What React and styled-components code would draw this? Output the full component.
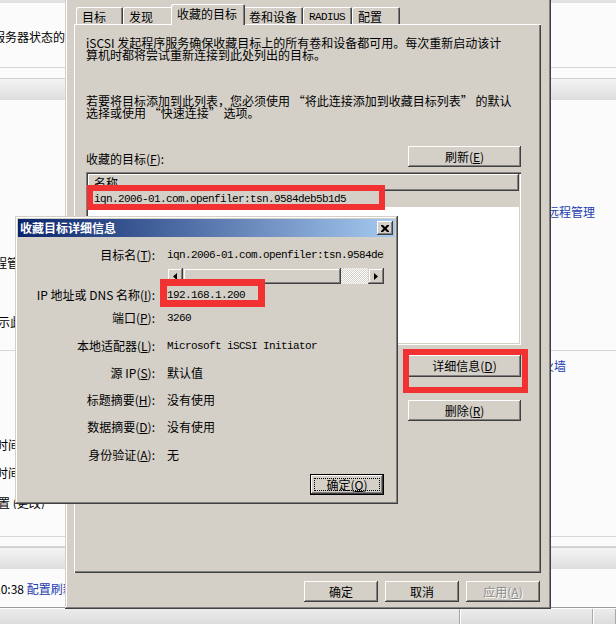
import React from "react";
import styled, { createGlobalStyle, css } from "styled-components";

const FACE = "#d4d0c8";
const CJK = `"Noto Sans CJK SC", "Liberation Sans", sans-serif`;
const MONO = `"Liberation Mono", "DejaVu Sans Mono", monospace`;
const RED = "#f23232";
const LINK = "#1c3cb0";

const GlobalStyle = createGlobalStyle`
  html, body { margin: 0; padding: 0; background: #fff; }
  body { font-family: ${CJK}; font-size: 12px; }
  *, *::before, *::after { box-sizing: border-box; }
`;

const Screen = styled.div`
  position: relative;
  width: 616px;
  height: 624px;
  overflow: hidden;
  font-family: ${CJK};
  font-size: 12px;
  line-height: 12px;
  color: #000;
`;

/* ---------- background page (server manager) ---------- */
const Page = styled.div`
  display: grid;
  grid-template-rows: 608px 16px;
  height: 100%;
`;

const Content = styled.div`
  display: flex;
  flex-direction: column;
  background: #fbfbfb;
  overflow: hidden;
  border-bottom: 1px solid #9a9a9a;
`;

const PageRow = styled.div`
  flex: none;
  display: grid;
  grid-template-columns: 65px 482px 1fr;
  align-items: center;
  height: ${(p) => p.$h}px;
  ${(p) => p.$rule && css`border-bottom: 1px solid #d6d6d6;`}
  ${(p) => p.$tone && css`background: ${p.$tone};`}
`;

const Band = styled.div`
  flex: none;
  height: 22px;
  border-top: 1px solid #d0d0d0;
  background: linear-gradient(#f4f4f4, #dedede);
`;

const Clip = styled.div`
  overflow: hidden;
  white-space: nowrap;
  display: flex;
  justify-content: ${(p) => (p.$end ? "flex-end" : "flex-start")};
`;

const PageText = styled.span`
  flex: none;
  margin-left: ${(p) => p.$shift || 0}px;
  color: ${(p) => (p.$link ? LINK : "#000")};
`;

const StatusBar = styled.div`
  display: flex;
  background: linear-gradient(#ececec, #dcdcdc);
  border-top: 1px solid #fff;
`;

const StatusCell = styled.div`
  flex: ${(p) => (p.$w ? `0 0 ${p.$w}px` : "1")};
  border-right: 1px solid #a8a8a8;
  box-shadow: 1px 0 #fff;
`;

/* ---------- classic widgets ---------- */
const U = styled.span`
  text-decoration: underline;
  text-underline-offset: 1px;
`;

const Btn = styled.button`
  position: relative;
  flex: none;
  margin: 0;
  padding: 0;
  border: 0;
  width: ${(p) => p.$w || 74}px;
  height: ${(p) => p.$h || 21}px;
  display: flex;
  align-items: center;
  justify-content: center;
  background: ${FACE};
  font-family: ${CJK};
  font-size: 12px;
  line-height: 12px;
  white-space: nowrap;
  color: ${(p) => (p.$disabled ? "#8c8c8c" : "#000")};
  ${(p) => p.$disabled && css`text-shadow: 1px 1px #fff;`}
  box-shadow: inset -1px -1px #404040, inset 1px 1px #fff,
    inset -2px -2px #808080, inset 2px 2px ${FACE};
  ${(p) =>
    p.$default &&
    css`
      box-shadow: inset 0 0 0 1px #000, inset -2px -2px #404040,
        inset 2px 2px #fff, inset -3px -3px #808080;
      &::after {
        content: "";
        position: absolute;
        inset: 4px;
        border: 1px dotted #000;
      }
    `}
`;

/* ---------- property sheet window ---------- */
const PropWindow = styled.div`
  position: absolute;
  left: 65px;
  top: -4px;
  width: 486px;
  height: 613px;
  background: ${FACE};
  box-shadow: inset -1px -1px #404040, inset 1px 1px ${FACE},
    inset -2px -2px #808080, inset 2px 2px #fff;
  padding: 8px 10px 0 9px;
  display: flex;
  flex-direction: column;
`;

const TabStrip = styled.div`
  height: 20px;
  display: flex;
  align-items: flex-end;
  padding-left: 2px;
  position: relative;
  z-index: 2;
`;

const Tab = styled.div`
  flex: none;
  width: ${(p) => p.$w}px;
  height: 17px;
  padding: 2px 0 0 6px;
  display: flex;
  align-items: center;
  white-space: nowrap;
  overflow: hidden;
  background: ${FACE};
  border-top-left-radius: 2px;
  border-top-right-radius: 2px;
  box-shadow: inset 1px 1px #fff, inset -1px 0 #404040, inset -2px 0 #808080;
  ${(p) =>
    p.$mono &&
    css`
      font-family: ${MONO};
      font-size: 11px;
      letter-spacing: -0.6px;
    `}
  ${(p) =>
    p.$active &&
    css`
      width: ${p.$w + 4}px;
      height: 21px;
      margin: 0 -2px -1px;
      padding: 0 0 1px 6px;
      position: relative;
      z-index: 1;
    `}
`;

const TabPanel = styled.div`
  height: 549px;
  background: ${FACE};
  box-shadow: inset 1px 1px #fff, inset -1px -1px #404040,
    inset -2px -2px #808080;
  padding: 13px 20px 0 12px;
  display: flex;
  flex-direction: column;
`;

const Para = styled.div`
  margin-top: ${(p) => p.$mt || 0}px;
  white-space: nowrap;
  line-height: 12px;
`;

const LabelRow = styled.div`
  margin-top: 27px;
  display: flex;
  align-items: flex-end;
  justify-content: space-between;
`;

const FieldLabel = styled.span`
  padding-bottom: 2px;
`;

const ListView = styled.div`
  margin-top: 5px;
  height: 173px;
  background: #fff;
  padding: 2px;
  box-shadow: inset 1px 1px #808080, inset 2px 2px #404040,
    inset -1px -1px #fff, inset -2px -2px ${FACE};
  display: flex;
  flex-direction: column;
`;

const ListHeader = styled.div`
  height: 17px;
  padding-left: 6px;
  display: flex;
  align-items: center;
  background: ${FACE};
  box-shadow: inset -1px -1px #404040, inset 1px 1px #fff,
    inset -2px -2px #808080;
`;

const ListItem = styled.div`
  height: 16px;
  padding-left: 6px;
  display: flex;
  align-items: center;
  background: ${FACE};
  font-family: ${MONO};
  font-size: 11px;
  letter-spacing: -0.6px;
  white-space: nowrap;
`;

const SideButtons = styled.div`
  display: flex;
  flex-direction: column;
  align-items: flex-end;
  margin-top: ${(p) => p.$mt}px;
`;

const FootButtons = styled.div`
  margin: 8px 1px 0 0;
  display: flex;
  justify-content: flex-end;
  gap: 7px;
`;

/* ---------- detail dialog ---------- */
const DetailWindow = styled.div`
  position: absolute;
  left: 15px;
  top: 216px;
  width: 383px;
  height: 288px;
  background: ${FACE};
  box-shadow: inset -1px -1px #404040, inset 1px 1px ${FACE},
    inset -2px -2px #808080, inset 2px 2px #fff;
  padding: 3px;
  display: flex;
  flex-direction: column;
  z-index: 5;
`;

const TitleBar = styled.div`
  height: 18px;
  flex: none;
  display: flex;
  align-items: center;
  justify-content: space-between;
  padding: 0 2px 0 2px;
  background: linear-gradient(90deg, #0a246a, #a6caf0);
  color: #fff;
  font-weight: bold;
`;

const CloseBtn = styled.div`
  width: 16px;
  height: 14px;
  display: flex;
  align-items: center;
  justify-content: center;
  background: ${FACE};
  box-shadow: inset -1px -1px #404040, inset 1px 1px #fff,
    inset -2px -2px #808080;
`;

const DetailBody = styled.div`
  display: flex;
  flex-direction: column;
`;

const Field = styled.div`
  margin-top: ${(p) => p.$mt}px;
  height: 16px;
  display: grid;
  grid-template-columns: 137px 217px;
  column-gap: 12px;
  align-items: center;
`;

const Label = styled.span`
  text-align: right;
  white-space: nowrap;
`;

const Value = styled.span`
  overflow: hidden;
  white-space: nowrap;
  ${(p) =>
    p.$mono &&
    css`
      font-family: ${MONO};
      font-size: 11px;
      letter-spacing: -0.6px;
    `}
`;

const HScroll = styled.div`
  display: flex;
  height: 16px;
`;

const ScrollArrow = styled.div`
  flex: none;
  width: 16px;
  height: 16px;
  display: flex;
  align-items: center;
  justify-content: center;
  background: ${FACE};
  box-shadow: inset -1px -1px #404040, inset 1px 1px ${FACE},
    inset -2px -2px #808080, inset 2px 2px #fff;
`;

const Thumb = styled.div`
  flex: none;
  width: 158px;
  background: ${FACE};
  box-shadow: inset -1px -1px #404040, inset 1px 1px ${FACE},
    inset -2px -2px #808080, inset 2px 2px #fff;
`;

const Track = styled.div`
  flex: 1;
  background: repeating-conic-gradient(#fff 0 25%, ${FACE} 0 50%) 0 0 / 2px 2px;
`;

const DialogFoot = styled.div`
  margin-top: 11px;
  padding-right: 11px;
  display: flex;
  justify-content: flex-end;
`;

/* ---------- annotation boxes ---------- */
const Mark = styled.div`
  position: absolute;
  left: ${(p) => p.$x}px;
  top: ${(p) => p.$y}px;
  width: ${(p) => p.$w}px;
  height: ${(p) => p.$h}px;
  border: ${(p) => p.$b}px solid ${RED};
  z-index: ${(p) => p.$z || 4};
  pointer-events: none;
`;

const IQN = "iqn.2006-01.com.openfiler:tsn.9584deb5b1d5";

export default function App() {
  return (
    <>
      <GlobalStyle />
      <Screen>
        <Page>
          <Content>
            <PageRow $h={3} $tone="#e2e2e2" />
            <PageRow $h={28} />
            <PageRow $h={12}>
              <Clip $end>
                <PageText>检查服务器状态的</PageText>
              </Clip>
            </PageRow>
            <PageRow $h={25} $rule />
            <PageRow $h={10} />
            <Band />
            <PageRow $h={106} />
            <PageRow $h={12}>
              <span />
              <span />
              <Clip>
                <PageText $link>远程管理</PageText>
              </Clip>
            </PageRow>
            <PageRow $h={39} />
            <PageRow $h={12}>
              <Clip>
                <PageText $shift={-17}>远程管理</PageText>
              </Clip>
            </PageRow>
            <PageRow $h={47} />
            <PageRow $h={12}>
              <Clip>
                <PageText $shift={-14}>显示此</PageText>
              </Clip>
            </PageRow>
            <PageRow $h={23} $rule />
            <PageRow $h={9} />
            <PageRow $h={12}>
              <span />
              <span />
              <Clip>
                <PageText $link $shift={-17}>防火墙</PageText>
              </Clip>
            </PageRow>
            <PageRow $h={67} />
            <PageRow $h={12}>
              <Clip>
                <PageText $shift={-4}>时间</PageText>
              </Clip>
            </PageRow>
            <PageRow $h={16} />
            <PageRow $h={12}>
              <Clip>
                <PageText $shift={-4}>时间</PageText>
              </Clip>
            </PageRow>
            <PageRow $h={18} />
            <PageRow $h={12}>
              <Clip>
                <PageText $shift={-2}>置 (更改)</PageText>
              </Clip>
            </PageRow>
            <PageRow $h={28} $rule />
            <PageRow $h={10} $rule />
            <Band />
            <PageRow $h={14} />
            <PageRow $h={12}>
              <Clip>
                <PageText $shift={-6}>
                  10:38 <PageText $link>配置刷新</PageText>
                </PageText>
              </Clip>
            </PageRow>
          </Content>
          <StatusBar>
            <StatusCell $w={460} />
            <StatusCell $w={133} />
            <StatusCell />
          </StatusBar>
        </Page>

        <PropWindow>
          <TabStrip>
            <Tab $w={47}>目标</Tab>
            <Tab $w={50}>发现</Tab>
            <Tab $w={70} $active>
              收藏的目标
            </Tab>
            <Tab $w={60}>卷和设备</Tab>
            <Tab $w={49} $mono>
              RADIUS
            </Tab>
            <Tab $w={48}>配置</Tab>
          </TabStrip>
          <TabPanel>
            <Para>iSCSI 发起程序服务确保收藏目标上的所有卷和设备都可用。每次重新启动该计</Para>
            <Para>算机时都将尝试重新连接到此处列出的目标。</Para>
            <Para $mt={34}>若要将目标添加到此列表，您必须使用 “将此连接添加到收藏目标列表” 的默认</Para>
            <Para>选择或使用 “快速连接” 选项。</Para>
            <LabelRow>
              <FieldLabel>
                收藏的目标(<U>F</U>):
              </FieldLabel>
              <Btn $w={113}>
                刷新(<U>E</U>)
              </Btn>
            </LabelRow>
            <ListView>
              <ListHeader>名称</ListHeader>
              <ListItem>{IQN}</ListItem>
            </ListView>
            <SideButtons $mt={10}>
              <Btn $w={113} $h={22}>
                详细信息(<U>D</U>)
              </Btn>
            </SideButtons>
            <SideButtons $mt={23}>
              <Btn $w={113}>
                删除(<U>R</U>)
              </Btn>
            </SideButtons>
          </TabPanel>
          <FootButtons>
            <Btn>确定</Btn>
            <Btn>取消</Btn>
            <Btn $disabled>
              应用(<U>A</U>)
            </Btn>
          </FootButtons>
        </PropWindow>

        <DetailWindow>
          <TitleBar>
            <span>收藏目标详细信息</span>
            <CloseBtn>
              <svg width="8" height="7" viewBox="0 0 8 7">
                <path
                  d="M0 0h2l2 2 2-2h2v1L5.5 3.5 8 6v1H6L4 5 2 7H0V6l2.5-2.5L0 1z"
                  fill="#000"
                />
              </svg>
            </CloseBtn>
          </TitleBar>
          <DetailBody>
            <Field $mt={10}>
              <Label>
                目标名(<U>T</U>):
              </Label>
              <Value $mono>{IQN}</Value>
            </Field>
            <Field $mt={5}>
              <span />
              <HScroll>
                <ScrollArrow>
                  <svg width="4" height="7" viewBox="0 0 4 7">
                    <polygon points="4,0 4,7 0,3.5" fill="#000" />
                  </svg>
                </ScrollArrow>
                <Thumb />
                <Track />
                <ScrollArrow>
                  <svg width="4" height="7" viewBox="0 0 4 7">
                    <polygon points="0,0 0,7 4,3.5" fill="#000" />
                  </svg>
                </ScrollArrow>
              </HScroll>
            </Field>
            <Field $mt={3}>
              <Label>
                IP 地址或 DNS 名称(<U>I</U>):
              </Label>
              <Value $mono>192.168.1.200</Value>
            </Field>
            <Field $mt={7}>
              <Label>
                端口(<U>P</U>):
              </Label>
              <Value $mono>3260</Value>
            </Field>
            <Field $mt={12}>
              <Label>
                本地适配器(<U>L</U>):
              </Label>
              <Value $mono>Microsoft iSCSI Initiator</Value>
            </Field>
            <Field $mt={11}>
              <Label>
                源 IP(<U>S</U>):
              </Label>
              <Value>默认值</Value>
            </Field>
            <Field $mt={11}>
              <Label>
                标题摘要(<U>H</U>):
              </Label>
              <Value>没有使用</Value>
            </Field>
            <Field $mt={11}>
              <Label>
                数据摘要(<U>D</U>):
              </Label>
              <Value>没有使用</Value>
            </Field>
            <Field $mt={12}>
              <Label>
                身份验证(<U>A</U>):
              </Label>
              <Value>无</Value>
            </Field>
            <DialogFoot>
              <Btn $default>
                确定(<U>O</U>)
              </Btn>
            </DialogFoot>
          </DetailBody>
        </DetailWindow>

        <Mark $x={87} $y={185} $w={298} $h={25} $b={6} />
        <Mark $x={403} $y={349} $w={125} $h={44} $b={6} />
        <Mark $x={160} $y={279} $w={105} $h={28} $b={7} $z={6} />
      </Screen>
    </>
  );
}
